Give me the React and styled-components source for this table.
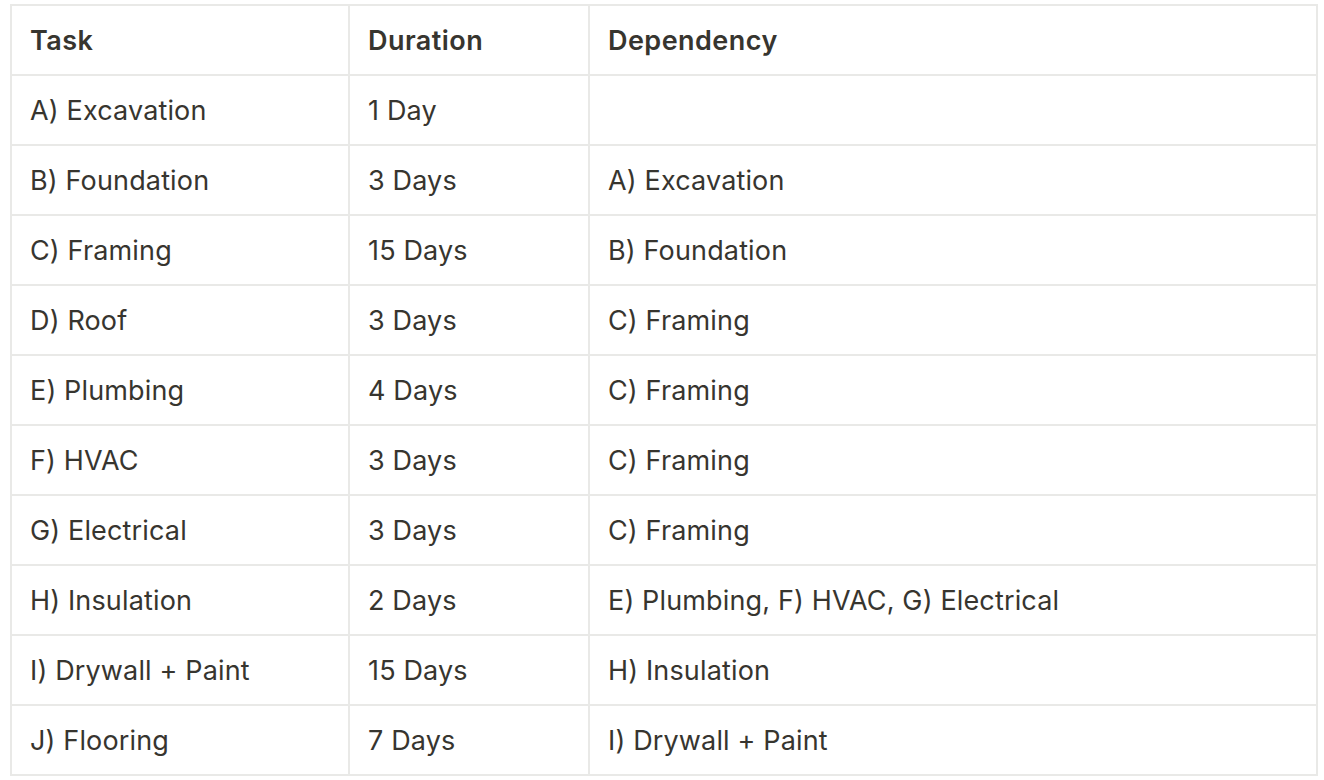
import styled, { createGlobalStyle } from 'styled-components';

const GlobalStyle = createGlobalStyle`
  body {
    margin: 0;
    background: #ffffff;
    font-family: Inter, "Noto Sans", sans-serif;
    color: #37352f;
  }
`;

const Page = styled.div`
  padding: 4px 0 0 10px;
`;

const Grid = styled.div`
  display: grid;
  grid-template-columns: 336px 238px 726px;
  grid-auto-rows: 68px;
  gap: 2px;
  padding: 2px;
  width: max-content;
  background: #e9e9e7;
`;

const Cell = styled.div`
  display: flex;
  align-items: center;
  padding: 0 18px;
  background: #ffffff;
  font-size: 27px;
  font-weight: ${p => (p.$head ? 600 : 400)};
  letter-spacing: ${p => (p.$head ? '0.45px' : '0.15px')};
  white-space: nowrap;
`;

const header = ['Task', 'Duration', 'Dependency'];

const rows = [
  ['A) Excavation', '1 Day', ''],
  ['B) Foundation', '3 Days', 'A) Excavation'],
  ['C) Framing', '15 Days', 'B) Foundation'],
  ['D) Roof', '3 Days', 'C) Framing'],
  ['E) Plumbing', '4 Days', 'C) Framing'],
  ['F) HVAC', '3 Days', 'C) Framing'],
  ['G) Electrical', '3 Days', 'C) Framing'],
  ['H) Insulation', '2 Days', 'E) Plumbing, F) HVAC, G) Electrical'],
  ['I) Drywall + Paint', '15 Days', 'H) Insulation'],
  ['J) Flooring', '7 Days', 'I) Drywall + Paint'],
];

export default function App() {
  return (
    <Page>
      <GlobalStyle />
      <Grid>
        {header.map(h => (
          <Cell key={h} $head>{h}</Cell>
        ))}
        {rows.map(row =>
          row.map((text, i) => <Cell key={row[0] + i}>{text}</Cell>)
        )}
      </Grid>
    </Page>
  );
}
